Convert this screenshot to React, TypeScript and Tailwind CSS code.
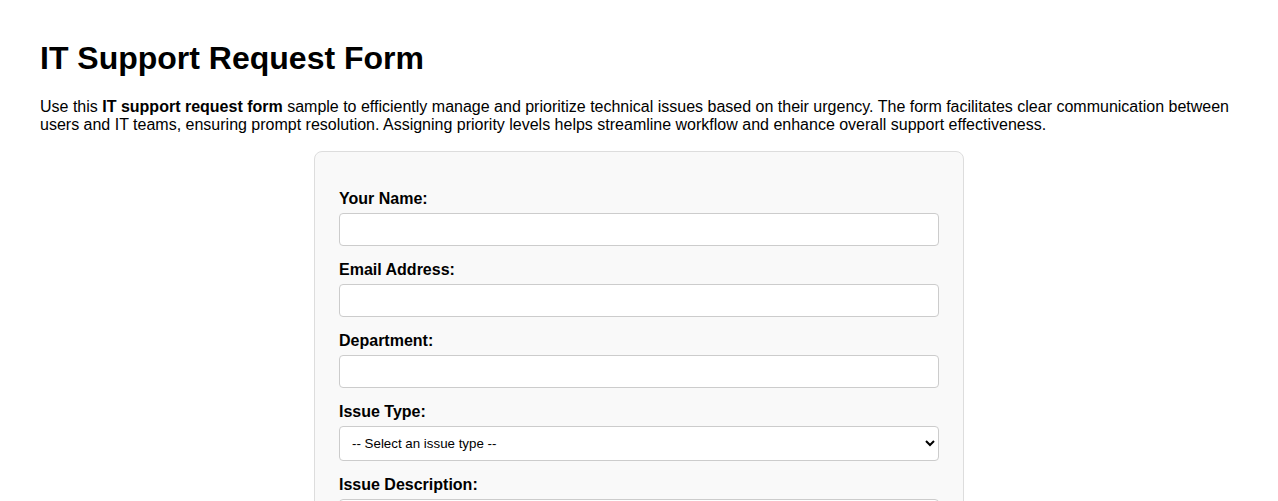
import React from 'react';

const labelCls = 'block text-base leading-[18px] font-bold text-black mb-[5px]';
const inputCls =
  'block w-full h-[33px] px-2 text-[13.33px] bg-white border border-[#ccc] rounded-[4px] mb-[15px] outline-none';
const selectCls =
  'block w-full h-[35px] px-2 text-[13.33px] bg-white border border-[#ccc] rounded-[4px] mb-[15px] outline-none';

export default function App() {
  return (
    <div className="min-h-screen bg-white px-10 pt-[40px] pb-10 font-['Liberation_Sans',Arial,sans-serif] text-black">
      <h1 className="text-[32px] leading-[37px] font-bold">IT Support Request Form</h1>
      <p className="mt-[21px] text-base leading-[18px]">
        Use this <strong>IT support request form</strong> sample to efficiently manage and prioritize technical issues
        based on their urgency. The form facilitates clear communication between users and IT teams, ensuring prompt
        resolution. Assigning priority levels helps streamline workflow and enhance overall support effectiveness.
      </p>

      <form className="mx-auto mt-[17px] w-[650px] bg-[#f9f9f9] border border-[#ddd] rounded-lg px-6 pt-[38px] pb-6">
        <label className={labelCls}>Your Name:</label>
        <input type="text" className={inputCls} />

        <label className={labelCls}>Email Address:</label>
        <input type="email" className={inputCls} />

        <label className={labelCls}>Department:</label>
        <input type="text" className={inputCls} />

        <label className={labelCls}>Issue Type:</label>
        <select defaultValue="" className={selectCls}>
          <option value="">-- Select an issue type --</option>
          <option>Hardware</option>
          <option>Software</option>
          <option>Network</option>
          <option>Access / Permissions</option>
          <option>Other</option>
        </select>

        <label className={labelCls}>Issue Description:</label>
        <textarea
          rows={5}
          className="block w-full px-2 py-2 text-[13.33px] bg-white border border-[#ccc] rounded-[4px] mb-[15px] outline-none"
        />

        <label className={labelCls}>Priority Level:</label>
        <select defaultValue="" className={selectCls}>
          <option value="">-- Select priority --</option>
          <option>Low</option>
          <option>Medium</option>
          <option>High</option>
          <option>Critical</option>
        </select>

        <button type="submit" className="px-5 py-[10px] text-base bg-[#007bff] text-white rounded-[4px]">
          Submit Request
        </button>
      </form>
    </div>
  );
}
